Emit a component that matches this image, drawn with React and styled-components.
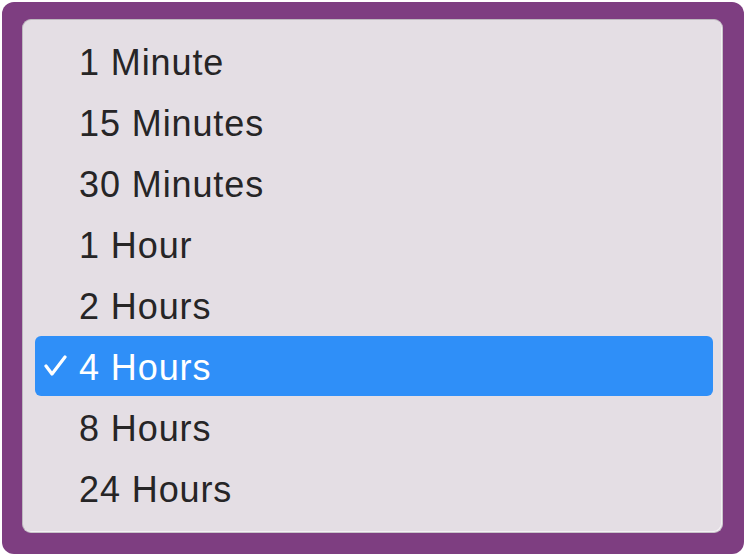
import React from 'react';
import styled, { createGlobalStyle, css } from 'styled-components';

const GlobalStyle = createGlobalStyle`
  html, body {
    margin: 0;
    padding: 0;
    background: #ffffff;
  }
  body {
    font-family: "Liberation Sans", Arial, sans-serif;
  }
`;

const options = ['1 Minute', '15 Minutes', '30 Minutes', '1 Hour', '2 Hours', '4 Hours', '8 Hours', '24 Hours'];

const App = () => {
  const selected = '4 Hours';
  return (
    <>
      <GlobalStyle />
      <Frame>
        <Menu>
          {options.map(option => (
            <Item key={option} active={option === selected}>
              <CheckSlot>
                {option === selected && (
                  <svg width="24" height="22" viewBox="0 0 24 22">
                    <polyline
                      points="2,11 8,19 21,2"
                      fill="none"
                      stroke="#ffffff"
                      strokeWidth="3.2"
                      strokeLinecap="round"
                      strokeLinejoin="round"
                    />
                  </svg>
                )}
              </CheckSlot>
              <Label>{option}</Label>
            </Item>
          ))}
        </Menu>
      </Frame>
    </>
  );
};

export default App;

const Frame = styled.div`
    box-sizing: border-box;
    margin: 2px 0 0 2px;
    width: 742px;
    height: 552px;
    padding: 17px 21px 21px 20px;
    background: #7e3e81;
    border-radius: 12px;
`;

const Menu = styled.div`
    box-sizing: border-box;
    height: 100%;
    padding: 11px 9px 0 12px;
    background: #e4dee4;
    border: 1px solid #c9c4ca;
    border-top-color: #bdb8be;
    border-left-color: #bdb8be;
    border-radius: 9px;
    box-shadow: inset -1px -1px 0 #f4f1f4;
`;

const Item = styled.div`
    display: flex;
    align-items: center;
    height: 61px;
    border-radius: 6px;
    color: #262526;

    ${props => props.active && css`
        height: 60px;
        margin-bottom: 1px;
        background: #2f8ff8;
        color: #ffffff;
    `}
`;

const CheckSlot = styled.div`
    display: flex;
    align-items: center;
    width: 35px;
    padding-left: 9px;
    height: 100%;
`;

const Label = styled.span`
    font-size: 36px;
    line-height: 1;
    letter-spacing: 0.9px;
    padding-top: 3px;
`;
